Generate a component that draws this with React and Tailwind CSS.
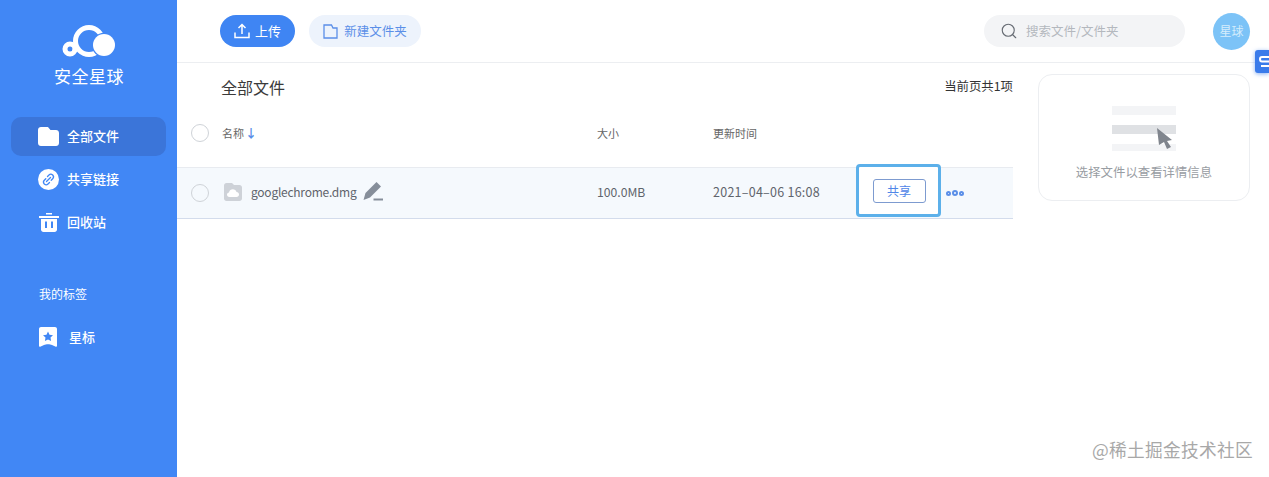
import { Search } from "lucide-react"

const cjk = "font-['Noto_Sans_CJK_SC','Liberation_Sans',sans-serif]"

function Logo() {
  return (
    <svg width="54" height="33" viewBox="0 0 54 33" fill="none">
      <circle cx="8" cy="24" r="5" stroke="white" strokeWidth="5" />
      <circle cx="27" cy="16" r="13.5" stroke="white" strokeWidth="5" />
      <path d="M11 22 L16 24 L14 27 L10 28 Z" fill="white" />
      <circle cx="42" cy="20" r="12.2" fill="#4187f5" />
      <circle cx="42" cy="20" r="11" fill="white" />
    </svg>
  )
}

function FolderIcon() {
  return (
    <svg width="21" height="19" viewBox="0 0 21 19">
      <path d="M3 0 H9 C10 0 10.5 .5 11 1.2 L12.5 3 H18 C19.7 3 21 4.3 21 6 V16 C21 17.7 19.7 19 18 19 H3 C1.3 19 0 17.7 0 16 V3 C0 1.3 1.3 0 3 0 Z" fill="white" />
    </svg>
  )
}

function LinkIcon() {
  return (
    <svg width="21" height="21" viewBox="0 0 21 21">
      <circle cx="10.5" cy="10.5" r="10.5" fill="white" />
      <path d="M9.5 7.5 L11 6 C12 5 13.6 5 14.7 6 C15.7 7.1 15.7 8.7 14.7 9.7 L13.2 11.2 M11.5 13.5 L10 15 C9 16 7.4 16 6.3 15 C5.3 13.9 5.3 12.3 6.3 11.3 L7.8 9.8 M8.5 12.5 L12.5 8.5" stroke="#4187f5" strokeWidth="1.3" fill="none" strokeLinecap="round" />
    </svg>
  )
}

function TrashIcon() {
  return (
    <svg width="20" height="19" viewBox="0 0 20 19">
      <path d="M7 0 H13 V1.4 H7 Z M0 3 H20 V5 H0 Z" fill="white" />
      <path d="M2 6 H18 V16.5 C18 17.9 16.9 19 15.5 19 H4.5 C3.1 19 2 17.9 2 16.5 Z" fill="white" />
      <path d="M7 8.5 V15 M13 8.5 V15" stroke="#4187f5" strokeWidth="2" />
    </svg>
  )
}

function StarIcon() {
  return (
    <svg width="18" height="20" viewBox="0 0 18 20">
      <path d="M2 0 H16 C17.1 0 18 .9 18 2 V19 C18 19.7 17.3 20 16.8 19.7 L13 18 C11 17 7 17 5 18 L1.2 19.7 C.7 20 0 19.7 0 19 V2 C0 .9 .9 0 2 0 Z" fill="white" />
      <path d="M9 4.5 L10.5 7.7 L14 8.2 L11.5 10.6 L12.1 14 L9 12.4 L5.9 14 L6.5 10.6 L4 8.2 L7.5 7.7 Z" fill="#4187f5" />
    </svg>
  )
}

function UploadIcon() {
  return (
    <svg width="16" height="16" viewBox="0 0 16 16" fill="none" stroke="white" strokeWidth="1.5">
      <path d="M8 11 V1.5 M4.5 5 L8 1.5 L11.5 5" />
      <path d="M1 9.5 V14.5 H15 V9.5" />
    </svg>
  )
}

function NewFolderIcon() {
  return (
    <svg width="15" height="15" viewBox="0 0 15 15" fill="none" stroke="#5b8fe8" strokeWidth="1.3">
      <path d="M1 1 H8.5 L10 4 H14 V14 H1 Z" />
    </svg>
  )
}

function CloudFile() {
  return (
    <svg width="18" height="18" viewBox="0 0 18 18">
      <path d="M2.5 0 H8 L10 2 H15.5 C16.9 2 18 3.1 18 4.5 V15.5 C18 16.9 16.9 18 15.5 18 H2.5 C1.1 18 0 16.9 0 15.5 V2.5 C0 1.1 1.1 0 2.5 0 Z" fill="#ced2d8" />
      <path d="M5.5 14 C3.8 14 3 12.8 3 11.6 C3 10.4 3.9 9.5 5 9.4 C5.4 7.5 7 6.3 8.8 6.3 C10.6 6.3 12 7.4 12.5 9 C14 9.1 15 10.2 15 11.5 C15 12.9 14 14 12.5 14 Z" fill="white" />
    </svg>
  )
}

function PencilIcon() {
  return (
    <svg width="20" height="19" viewBox="0 0 20 19" className="ml-[7px] -mt-[1px]">
      <path d="M13.5 0 L18 4.5 L7 15.5 L0.5 18 L2.5 11 Z" fill="#868e9a" />
      <path d="M10.5 16.5 H20 V18.5 H10.5 Z" fill="#868e9a" />
    </svg>
  )
}

function Circle() {
  return <div className="w-[18px] h-[18px] rounded-full border border-[#cfd3d8] bg-transparent" />
}

function NavItem({ icon, label, active }) {
  return (
    <div className={`h-[39px] my-[2px] mx-[11px] pl-[27px] pb-[1px] flex items-center gap-[8px] rounded-[10px] text-[13px] font-medium text-white ${active ? "bg-[#3b75d9]" : ""}`}>
      <div className="w-[21px] flex justify-center">{icon}</div>
      <span>{label}</span>
    </div>
  )
}

export default function App() {
  return (
    <div className={`relative flex h-[477px] overflow-hidden bg-white ${cjk}`}>

      {/* Sidebar */}
      <aside className="w-[177px] shrink-0 bg-[#4187f5] flex flex-col">
        <div className="h-[115px] flex flex-col items-center pt-[25px] pl-[1px]">
          <Logo />
          <p className="mt-[6px] text-[17px] leading-[24px] tracking-[0.5px] text-white">安全星球</p>
        </div>
        <NavItem icon={<FolderIcon />} label="全部文件" active />
        <NavItem icon={<LinkIcon />} label="共享链接" />
        <NavItem icon={<TrashIcon />} label="回收站" />
        <p className="mt-[41px] pl-[39px] text-[12px] leading-[18px] text-white">我的标签</p>
        <div className="mt-[24px] pl-[39px] flex items-center gap-[12px] text-[13px] font-medium text-white">
          <StarIcon />
          <span>星标</span>
        </div>
      </aside>

      <main className="flex-1 min-w-0 flex flex-col">

        {/* Header */}
        <header className="h-[63px] shrink-0 border-b border-[#eceef1] flex items-center pl-[43px] pr-[19px]">
          <button className="h-[32px] w-[75px] rounded-full bg-[#3f85f3] text-white text-[13px] flex items-center justify-center gap-[5px]">
            <UploadIcon />
            上传
          </button>
          <button className="ml-[14px] h-[32px] w-[112px] rounded-full bg-[#edf3fc] text-[#5b8fe8] text-[12.5px] flex items-center justify-center gap-[6px]">
            <NewFolderIcon />
            新建文件夹
          </button>
          <div className="ml-auto w-[201px] h-[32px] rounded-full bg-[#f3f4f6] flex items-center pl-[16px] gap-[8px] text-[12.5px] text-[#b4b8be]">
            <Search size={18} strokeWidth={1.5} color="#666b73" />
            搜索文件/文件夹
          </div>
          <div className="ml-[28px] w-[37px] h-[37px] rounded-full bg-[#7cc3f7] flex items-center justify-center text-[12px] text-[#d5edfc]">
            星球
          </div>
        </header>

        <div className="flex flex-1 min-h-0">

          {/* File table */}
          <section className="w-[836px] shrink-0">
            <div className="h-[48px] pb-[1px] flex items-center justify-between pl-[44px]">
              <h2 className="text-[16px] text-[#3a3a3a]">全部文件</h2>
              <span className="text-[12.4px] text-[#333]">当前页共1项</span>
            </div>
            <div className="h-[56px] pb-[12px] flex items-center text-[11px] text-[#666]">
              <div className="w-[45px] pl-[14px]"><Circle /></div>
              <div className="w-[375px] flex items-center gap-[1px]">
                名称
                <span className="text-[#5b8fe8] text-[12px] leading-none font-bold">↓</span>
              </div>
              <div className="w-[116px]">大小</div>
              <div>更新时间</div>
            </div>
            <div className="h-[52px] flex items-center bg-[#f5f9fd] border-t border-t-[#e8ebf0] border-b border-b-[#d3dcec] text-[#5f646c]">
              <div className="w-[45px] pl-[14px]"><Circle /></div>
              <div className="w-[375px] flex items-center -mt-[2px]">
                <div className="ml-[2px]"><CloudFile /></div>
                <span className="ml-[9px] text-[12px] tracking-[-0.25px]">googlechrome.dmg</span>
                <PencilIcon />
              </div>
              <div className="w-[116px] text-[12.2px] -mt-[2px]">100.0MB</div>
              <div className="w-[143px] text-[12.5px] tracking-[0.25px] -mt-[2px]">2021–04–06 16:08</div>
              <div className="self-start w-[85px] h-[53px] -mt-[4px] pl-[1px] pt-[1px] border-[3px] border-[#5cb0ea] rounded-[4px] bg-white flex items-center justify-center">
                <button className="w-[53px] h-[24px] rounded-[3px] border border-[#7d9bd0] text-[12px] text-[#4f86e8]">共享</button>
              </div>
              <div className="ml-[5px] flex items-center gap-[1px]">
                <span className="w-[5px] h-[5px] rounded-full border-2 border-[#5b8fe8]" />
                <span className="w-[6px] h-[6px] rounded-full border-2 border-[#5b8fe8]" />
                <span className="w-[5px] h-[5px] rounded-full border-2 border-[#5b8fe8]" />
              </div>
            </div>
          </section>

          {/* Detail card */}
          <section className="ml-[25px] mt-[11px] w-[212px] h-[127px] rounded-[14px] border border-[#eceef1] flex flex-col items-center pt-[31px]">
            <div className="relative w-[64px] flex flex-col gap-[10px]">
              <div className="h-[9px] bg-[#f3f4f6]" />
              <div className="h-[9px] bg-[#dfe1e4]" />
              <div className="h-[7px] bg-[#f3f4f6]" />
              <svg width="16" height="21" viewBox="0 0 16 21" className="absolute left-[45px] top-[22px]">
                <path d="M0 0 L15 12 L10 13 L14 19 L10 21 L7 14 L2 17 Z" fill="#80858d" />
              </svg>
            </div>
            <p className="mt-[12px] text-[12.4px] leading-[18px] text-[#999da3]">选择文件以查看详情信息</p>
          </section>
        </div>
      </main>

      {/* Floating tab */}
      <div className="absolute right-0 top-[50px] w-[14px] h-[23px] rounded-l-[3px] bg-[#3a7bea] shadow-[0_1px_4px_rgba(58,123,234,0.6)] flex items-center pl-[4px]">
        <svg width="10" height="13" viewBox="0 0 10 13" fill="none" stroke="white" strokeWidth="2">
          <path d="M10 2 H3 C1.5 2 1 3 1 4 C1 5.5 2 6.5 3 6.5 H10 M10 11 H2" />
        </svg>
      </div>

      {/* Watermark */}
      <div className="absolute right-[16px] bottom-[16px] text-[17.7px] leading-[24px] text-[#a8a8a8] tracking-[0.3px]">@稀土掘金技术社区</div>
    </div>
  )
}
